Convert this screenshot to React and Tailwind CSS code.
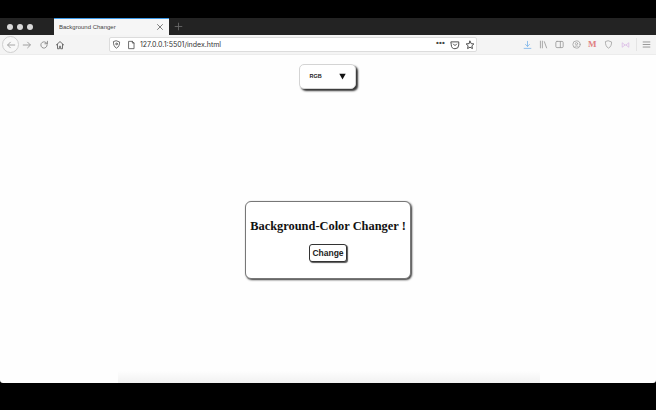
import React from "react";

const Ico = ({ className = "", children, w = 12, h = 12, vb = "0 0 16 16" }) => (
  <svg width={w} height={h} viewBox={vb} fill="none" stroke="currentColor" strokeWidth="1.5" strokeLinecap="round" strokeLinejoin="round" className={`shrink-0 ${className}`}>
    {children}
  </svg>
);

function TabStrip() {
  return (
    <div className="h-[17px] bg-[#232323] flex items-stretch shrink-0">
      <div className="w-[54px] flex items-center pl-[7px] gap-[4px] shrink-0">
        <div className="w-[6px] h-[6px] rounded-full bg-[#d8d8d8]" />
        <div className="w-[6px] h-[6px] rounded-full bg-[#d8d8d8]" />
        <div className="w-[6px] h-[6px] rounded-full bg-[#d8d8d8]" />
      </div>
      <div className="w-[115px] bg-[#f6f6f6] border-t border-[#3f9be8] flex items-center pl-[5px] pr-[5px] justify-between shrink-0">
        <span className="text-[6px] leading-none text-[#444]">Background Changer</span>
        <Ico w={8} h={8} className="text-[#555]"><path d="M3 3l10 10M13 3L3 13" /></Ico>
      </div>
      <div className="flex items-center pl-[5px] text-[#6b6b6b]">
        <Ico w={9} h={9}><path d="M8 2v12M2 8h12" /></Ico>
      </div>
    </div>
  );
}

function Toolbar() {
  return (
    <div className="h-[20px] bg-[#f4f4f4] flex items-center shrink-0 border-b border-[#ececec]">
      <div className="w-[17px] h-[17px] ml-[2px] rounded-full border border-[#cfcfcf] bg-[#f8f8f8] flex items-center justify-center text-[#a0a0a0] shrink-0">
        <Ico w={10} h={10}><path d="M14 8H3M7 3.5L2.5 8 7 12.5" /></Ico>
      </div>
      <Ico w={10} h={10} className="ml-[3px] text-[#9a9a9a]"><path d="M2 8h11M9 3.5L13.5 8 9 12.5" /></Ico>
      <Ico w={10} h={10} className="ml-[7px] text-[#8a8a8a]"><path d="M13 8a5 5 0 1 1-1.6-3.7L13.5 6M13.5 2v4h-4" /></Ico>
      <Ico w={10} h={10} className="ml-[6px] text-[#666]"><path d="M2 8l6-5.5L14 8M4 7v7h3v-4h2v4h3V7" /></Ico>
      <div className="w-[368px] h-[15px] ml-[44px] bg-white border border-[#dcdcdc] rounded-[2px] flex items-center shrink-0 pl-[2px] pr-[1px]">
        <Ico w={9} h={9} className="text-[#555]"><path d="M8 1.5l5.5 2c0 5-1.5 9-5.5 11-4-2-5.5-6-5.5-11z" /><circle cx="8" cy="7" r="1.5" /></Ico>
        <Ico w={9} h={10} className="ml-[6px] text-[#555]"><path d="M3.5 1.5h6l3 3v10h-9zM9.5 1.5v3h3" /></Ico>
        <span className="ml-[4px] text-[7px] leading-none text-[#333] font-['Inter',sans-serif]">127.0.0.1:5501/index.html</span>
        <div className="ml-auto flex items-center gap-[2px] text-[#444]">
          <span className="text-[8px] leading-none font-bold tracking-[0.2px] mr-[3px] -mt-[3px]">•••</span>
          <Ico w={10} h={10}><path d="M2 3h12v5a6 6 0 0 1-12 0zM5.5 6.5L8 9l2.5-2.5" /></Ico>
          <Ico w={10} h={10} className="ml-[3px]"><path d="M8 1.8l1.9 4 4.3.5-3.2 3 .9 4.4L8 11.5l-3.9 2.2.9-4.4-3.2-3 4.3-.5z" /></Ico>
        </div>
      </div>
      <Ico w={9} h={10} className="ml-[46px] text-[#7db4ea]"><path d="M8 1.5v9M4.5 7L8 10.5 11.5 7M2 14h12" /></Ico>
      <Ico w={9} h={9} className="ml-[7px] text-[#9a9a9a]"><path d="M2.5 2v12M6 2v12M9.5 3l4 11" /></Ico>
      <Ico w={9} h={9} className="ml-[7px] text-[#9a9a9a]"><rect x="1.5" y="2.5" width="13" height="11" rx="2" /><path d="M9.5 2.5v11" /></Ico>
      <Ico w={9} h={9} className="ml-[8px] text-[#a5a5a5]"><circle cx="8" cy="8" r="6.5" /><circle cx="8" cy="6.5" r="2" /><path d="M4.5 12c1-2 6-2 7 0" /></Ico>
      <span className="ml-[7px] w-[9px] text-[9px] leading-none font-bold text-[#e08080] font-['Liberation_Serif',serif]">M</span>
      <Ico w={9} h={9} className="ml-[7px] text-[#a5a5a5]"><path d="M8 1.5l5.5 2c0 5-1.5 9-5.5 11-4-2-5.5-6-5.5-11z" /></Ico>
      <Ico w={9} h={8} className="ml-[8px] text-[#d9b8e6]"><path d="M2 4l5 4-5 4zM14 4L9 8l5 4zM7 8h2" /></Ico>
      <div className="w-px h-[13px] ml-[6px] bg-[#e4e4e4]" />
      <Ico w={9} h={9} className="ml-[5px] text-[#888]"><path d="M2 3.5h12M2 8h12M2 12.5h12" /></Ico>
    </div>
  );
}

function Page() {
  return (
    <div className="h-[328px] bg-[#fefefe] rounded-b-[3px] flex flex-col items-center shrink-0 relative overflow-hidden pt-[9px]">
      <div className="w-[57px] h-[25px] mr-[2px] bg-white rounded-[5px] border border-[#d4d4d4] shadow-[2px_2px_2px_#333] flex items-center justify-between pl-[10px] pr-[9px] shrink-0">
        <span className="text-[5.5px] leading-none font-bold text-[#222] font-['Liberation_Sans',sans-serif]">RGB</span>
        <svg width="7" height="7" viewBox="0 0 7 7" className="shrink-0"><path d="M0.3 0.8h6.4L3.5 6.6z" fill="#111" /></svg>
      </div>
      <div className="w-[166px] h-[78px] mt-[112px] bg-white rounded-[6px] border border-[#777] shadow-[1px_1px_2px_#333] flex flex-col items-center shrink-0">
        <h1 className="mt-[16px] text-[12.4px] leading-[16px] font-bold text-[#111] whitespace-nowrap font-['Liberation_Serif',serif]">Background-Color Changer !</h1>
        <button className="mt-[10px] w-[38px] h-[18px] bg-white rounded-[3px] border border-[#333] shadow-[1px_1px_1px_#555] text-[8.5px] leading-none font-bold text-[#222] font-['Liberation_Sans',sans-serif]">Change</button>
      </div>
      <div className="absolute left-[118px] bottom-0 w-[422px] h-[12px] bg-gradient-to-b from-[#fefefe] to-[#f1f1f1]" />
    </div>
  );
}

export default function App() {
  return (
    <div className="w-[656px] h-[410px] bg-black flex flex-col overflow-hidden font-['Liberation_Sans',sans-serif]">
      <div className="h-[18px] shrink-0" />
      <TabStrip />
      <Toolbar />
      <Page />
    </div>
  );
}
